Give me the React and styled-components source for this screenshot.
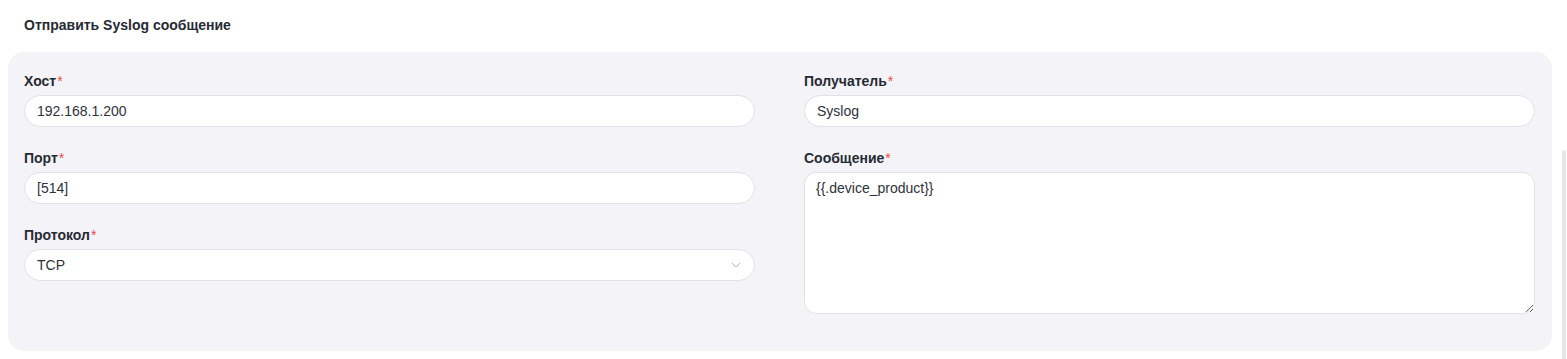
import React from "react";
import styled, { createGlobalStyle } from "styled-components";

const Global = createGlobalStyle`
  html, body { margin: 0; padding: 0; background: #ffffff; }
  body { font-family: "Liberation Sans", Arial, sans-serif; color: #262a33; }
  * { box-sizing: border-box; }
`;

const Page = styled.div`
  position: relative;
  width: 1567px;
  height: 359px;
  overflow: hidden;
  padding: 15px 15px 0 8px;
`;

const Title = styled.h2`
  margin: 0 0 17px 16px;
  font-size: 14px;
  line-height: 20px;
  font-weight: 700;
  color: #262a33;
`;

const Panel = styled.div`
  background: #f4f4f8;
  border-radius: 16px;
  padding: 19px 17px 37px 16px;
  display: grid;
  grid-template-columns: 1fr 1fr;
  column-gap: 49px;
  align-items: start;
`;

const Column = styled.div`
  display: flex;
  flex-direction: column;
  gap: 21px;
`;

const Field = styled.div`
  display: flex;
  flex-direction: column;
  gap: 4px;
`;

const Label = styled.label`
  font-size: 14px;
  line-height: 20px;
  font-weight: 700;
  color: #262a33;
`;

const Req = styled.span`
  color: #ef4a4a;
  font-weight: 400;
  margin-left: 1px;
`;

const Input = styled.input`
  height: 32px;
  width: 100%;
  border: 1px solid #e1e1e7;
  border-radius: 16px;
  background: #ffffff;
  padding: 0 12px;
  font-family: "Liberation Sans", Arial, sans-serif;
  font-size: 14px;
  color: #2e323b;
  outline: none;
`;

const SelectBox = styled.div`
  height: 32px;
  width: 100%;
  border: 1px solid #e1e1e7;
  border-radius: 16px;
  background: #ffffff;
  padding: 0 12px;
  display: flex;
  align-items: center;
  justify-content: space-between;
  font-size: 14px;
  color: #2e323b;
`;

const Chevron = styled.svg`
  width: 10px;
  height: 6px;
  margin-right: 1px;
`;

const TextArea = styled.textarea`
  height: 142px;
  width: 100%;
  border: 1px solid #e1e1e7;
  border-radius: 12px;
  background: #ffffff;
  padding: 5px 11px;
  font-family: "Liberation Sans", Arial, sans-serif;
  font-size: 14px;
  line-height: 20px;
  color: #2e323b;
  resize: vertical;
  outline: none;
  display: block;
`;

const ScrollThumb = styled.div`
  position: absolute;
  right: 1px;
  top: 150px;
  width: 4px;
  height: 230px;
  background: #e7e7eb;
  border-radius: 2px;
`;

function FieldBlock({ label, children }) {
  return (
    <Field>
      <Label>
        {label}
        <Req>*</Req>
      </Label>
      {children}
    </Field>
  );
}

export default function App() {
  return (
    <>
      <Global />
      <Page>
        <Title>Отправить Syslog сообщение</Title>
        <Panel>
          <Column>
            <FieldBlock label="Хост">
              <Input defaultValue="192.168.1.200" />
            </FieldBlock>
            <FieldBlock label="Порт">
              <Input defaultValue="[514]" />
            </FieldBlock>
            <FieldBlock label="Протокол">
              <SelectBox>
                <span>TCP</span>
                <Chevron viewBox="0 0 10 6" fill="none">
                  <path d="M1 1l4 4 4-4" stroke="#b9b9c0" strokeWidth="1" />
                </Chevron>
              </SelectBox>
            </FieldBlock>
          </Column>
          <Column>
            <FieldBlock label="Получатель">
              <Input defaultValue="Syslog" />
            </FieldBlock>
            <FieldBlock label="Сообщение">
              <TextArea defaultValue="{{.device_product}}" />
            </FieldBlock>
          </Column>
        </Panel>
        <ScrollThumb />
      </Page>
    </>
  );
}
